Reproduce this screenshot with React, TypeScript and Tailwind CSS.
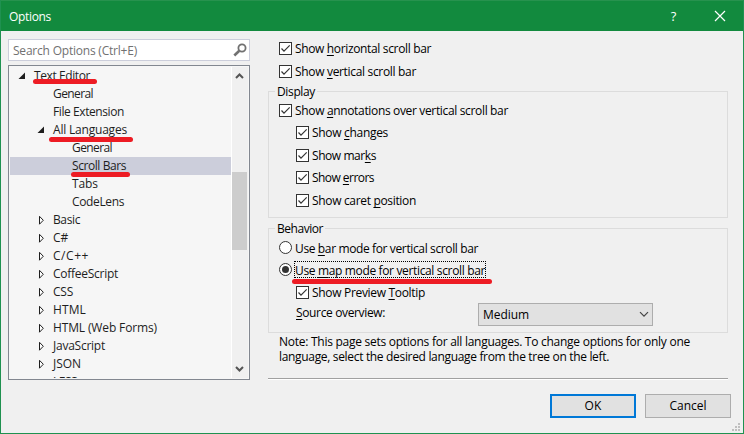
import { useLayoutEffect, useRef, useState } from "react";

/* A run of text spread to a given width; "_" marks the access key that follows it. */
function Label({ text, width, className = "" }: { text: string; width: number; className?: string }) {
  const ref = useRef<HTMLSpanElement>(null);
  const [spacing, setSpacing] = useState(0);
  const at = text.indexOf("_");
  const plain = text.replace("_", "");
  useLayoutEffect(() => {
    const el = ref.current;
    if (!el) return;
    el.style.letterSpacing = "0px";
    const next = (width - el.getBoundingClientRect().width) / plain.length;
    el.style.letterSpacing = `${next}px`;
    setSpacing(next);
  }, [width, plain]);
  return (
    <span ref={ref} className={`inline-block whitespace-pre ${className}`} style={{ letterSpacing: spacing }}>
      {at < 0 ? (
        plain
      ) : (
        <>
          {plain.slice(0, at)}
          <span className="underline decoration-1 underline-offset-2 [text-decoration-skip-ink:none]">{plain[at]}</span>
          {plain.slice(at + 1)}
        </>
      )}
    </span>
  );
}

type Node = { text: string; width: number; level: number; state?: "open" | "closed"; selected?: boolean; mark?: string };

const nodes: Node[] = [
  { text: "Text Editor", width: 56, level: 0, state: "open", mark: "left-[24px] w-[64px] top-[12px]" },
  { text: "General", width: 40, level: 1 },
  { text: "File Extension", width: 71, level: 1 },
  { text: "All Languages", width: 74, level: 1, state: "open", mark: "left-[40px] w-[84px] top-[16px]" },
  { text: "General", width: 40, level: 2 },
  { text: "Scroll Bars", width: 54, level: 2, selected: true, mark: "left-[61px] w-[59px] top-[15px]" },
  { text: "Tabs", width: 26, level: 2 },
  { text: "CodeLens", width: 52, level: 2 },
  { text: "Basic", width: 27, level: 1, state: "closed" },
  { text: "C#", width: 15, level: 1, state: "closed" },
  { text: "C/C++", width: 36, level: 1, state: "closed" },
  { text: "CoffeeScript", width: 65, level: 1, state: "closed" },
  { text: "CSS", width: 20, level: 1, state: "closed" },
  { text: "HTML", width: 33, level: 1, state: "closed" },
  { text: "HTML (Web Forms)", width: 104, level: 1, state: "closed" },
  { text: "JavaScript", width: 52, level: 1, state: "closed" },
  { text: "JSON", width: 28, level: 1, state: "closed" },
  { text: "LESS", width: 24, level: 1, state: "closed" },
];

const indents = ["pl-[7px]", "pl-[26px]", "pl-[45px]"];

function TreeRow({ node }: { node: Node }) {
  return (
    <div className={`relative flex h-[18px] shrink-0 items-start ${node.selected ? "ml-px bg-[#cccedb] pl-[44px]" : indents[node.level]}`}>
      <span className="h-[18px] w-[18px] shrink-0">
        {node.state === "open" && (
          <svg width="18" height="18" viewBox="0 0 18 18">
            <path d="M9 5.5V12H2.5Z" fill="#1e1e1e" />
          </svg>
        )}
        {node.state === "closed" && (
          <svg width="18" height="18" viewBox="0 0 18 18">
            <path d="M4.5 5.3V13.2L8.3 9.25Z" fill="#fff" stroke="#1e1e1e" />
          </svg>
        )}
      </span>
      <Label text={node.text} width={node.width} className="leading-[18px] text-[#1e1e1e]" />
      {node.mark && <span className={`absolute z-10 h-[5px] rounded-full bg-[#ed1c24] ${node.mark}`} />}
    </div>
  );
}

function Check({ text, width, className = "" }: { text: string; width: number; className?: string }) {
  return (
    <div className={`flex h-[13px] items-center gap-[3px] ${className}`}>
      <svg width="13" height="13" viewBox="0 0 13 13" className="shrink-0">
        <rect x=".5" y=".5" width="12" height="12" fill="#fff" stroke="#333" />
        <path d="M2.5 6.5 5 9.2 10.7 3.3" fill="none" stroke="#333" strokeWidth="1.2" />
      </svg>
      <Label text={text} width={width} className="leading-[15px]" />
    </div>
  );
}

function Radio({ text, width, on = false, className = "" }: { text: string; width: number; on?: boolean; className?: string }) {
  return (
    <div className={`flex h-[13px] items-center ${className}`}>
      <svg width="13" height="13" viewBox="0 0 13 13" className="shrink-0">
        <circle cx="6.5" cy="6.5" r="6" fill="#fff" stroke="#333" />
        {on && <circle cx="6.5" cy="6.5" r="3.5" fill="#333" />}
      </svg>
      <div className="relative ml-[3px] h-[15px]">
        <Label text={text} width={width} className="leading-[15px]" />
        {on && <span className="absolute top-[-1px] left-[-1px] h-[17px] w-[192px] border border-dotted border-black" />}
        {on && <span className="absolute top-[17px] left-[-3px] h-[5px] w-[200px] rounded-full bg-[#ed1c24]" />}
      </div>
    </div>
  );
}

export default function App() {
  return (
    <div className="flex h-[434px] w-[744px] flex-col overflow-hidden border border-t-0 border-[#1f9150] bg-[#f0f0f0] font-['Open_Sans','Noto_Sans',sans-serif] text-[12px] text-black">
      <header className="flex h-[31px] shrink-0 items-center border-t border-[#27924e] bg-[#128a3e] pl-[8px] text-white">
        <Label text="Options" width={42} className="mt-px leading-[16px]" />
        <span className="ml-auto w-[9px] text-center text-[13px] leading-[16px]">?</span>
        <svg width="12" height="12" viewBox="0 0 12 12" className="mr-[17px] ml-[36px]">
          <path d="M1 1 11 11M11 1 1 11" stroke="#fff" strokeWidth="1.2" />
        </svg>
      </header>

      <div className="flex flex-1">
        <aside className="ml-[7px] w-[242px] shrink-0">
          <div className="mt-[8px] flex h-[22px] items-center border border-[#cccedb] bg-white pl-[4px]">
            <Label text="Search Options (Ctrl+E)" width={124} className="mt-[2px] leading-[16px] text-[#717171]" />
            <svg width="14" height="14" viewBox="0 0 14 14" className="mr-[2px] ml-auto">
              <circle cx="9" cy="5" r="3.6" fill="none" stroke="#717171" strokeWidth="1.8" />
              <path d="M6.3 7.7 1.3 12.5" stroke="#717171" strokeWidth="2.6" />
            </svg>
          </div>

          <div className="mt-[4px] flex h-[315px] border border-[#828790] bg-[#f6f6f6]">
            <div className="flex min-w-0 flex-1 flex-col overflow-hidden pt-px pb-px">
              <div className="flex min-h-0 flex-1 flex-col overflow-hidden">
                {nodes.map((n, i) => (
                  <TreeRow key={i} node={n} />
                ))}
              </div>
            </div>
            <div className="my-px mr-px flex w-[17px] flex-col items-center border-l border-white bg-[#f0f0f0]">
              <svg width="16" height="17" viewBox="0 0 16 17" className="shrink-0">
                <path d="M4 11 7.5 7.5 11 11" fill="none" stroke="#555" strokeWidth="2" />
              </svg>
              <div className="mt-[88px] mr-px h-[78px] w-[15px] bg-[#cdcdcd]" />
              <svg width="16" height="17" viewBox="0 0 16 17" className="mt-auto shrink-0">
                <path d="M4 6 7.5 9.5 11 6" fill="none" stroke="#555" strokeWidth="2" />
              </svg>
            </div>
          </div>
        </aside>

        <main className="ml-[18px] flex w-[460px] flex-col">
          <Check text="Show _horizontal scroll bar" width={136} className="mt-[11px] ml-[11px]" />
          <Check text="Show _vertical scroll bar" width={121} className="mt-[10px] ml-[11px]" />

          <section className="mt-[13px] h-[127px] border border-[#dcdcdc]">
            <h2 className="mt-[-8px] ml-[6px] flex h-[16px] w-fit bg-[#f0f0f0] px-[2px]">
              <Label text="Display" width={38} className="leading-[16px]" />
            </h2>
            <Check text="Show _annotations over vertical scroll bar" width={213} className="mt-[4px] ml-[10px]" />
            <Check text="Show _changes" width={76} className="mt-[9px] ml-[27px]" />
            <Check text="Show mar_ks" width={64} className="mt-[10px] ml-[27px]" />
            <Check text="Show _errors" width={62} className="mt-[9px] ml-[27px]" />
            <Check text="Show caret _position" width={104} className="mt-[10px] ml-[27px]" />
          </section>

          <section className="mt-[10px] h-[105px] border border-[#dcdcdc]">
            <h2 className="mt-[-8px] ml-[6px] flex h-[16px] w-fit bg-[#f0f0f0] px-[2px]">
              <Label text="Behavior" width={46} className="leading-[16px]" />
            </h2>
            <Radio text="Use _bar mode for vertical scroll bar" width={183} className="mt-[4px] ml-[10px]" />
            <Radio text="Use _map mode for vertical scroll bar" width={190} on className="mt-[9px] ml-[10px]" />
            <Check text="Show Preview _Tooltip" width={113} className="mt-[10px] ml-[27px]" />
            <div className="mt-[4px] ml-[27px] flex h-[23px]">
              <Label text="_Source overview:" width={89} className="mt-[2px] leading-[16px]" />
              <div className="ml-[93px] flex w-[175px] items-center border border-[#adadad] bg-[#e1e1e1] pl-[4px]">
                <Label text="Medium" width={46} className="mt-px leading-[16px]" />
                <svg width="10" height="7" viewBox="0 0 10 7" className="mr-[3px] ml-auto">
                  <path d="M1 1.2 5 5.2 9 1.2" fill="none" stroke="#444" strokeWidth="1.2" />
                </svg>
              </div>
            </div>
          </section>

          <div className="mt-px ml-[11px] flex flex-col items-start leading-[15px]">
            <Label text="Note: This page sets options for all languages. To change options for only one" width={411} />
            <Label text="language, select the desired language from the tree on the left." width={330} />
          </div>
          <div className="mt-auto mb-[53px] h-[2px] border-b border-white bg-[#a0a0a0]" />
        </main>
      </div>

      <footer className="relative mt-[-39px] ml-auto flex h-[39px] w-[193px] shrink-0 items-start gap-[9px]">
        <button className="flex h-[24px] w-[86px] items-center justify-center border-2 border-[#0078d7] bg-[#e1e1e1]">
          <Label text="OK" width={17} className="leading-[16px]" />
        </button>
        <button className="flex h-[24px] w-[86px] items-center justify-center border border-[#adadad] bg-[#e1e1e1]">
          <Label text="Cancel" width={37} className="leading-[16px]" />
        </button>
        <svg width="8" height="8" viewBox="0 0 8 8" className="absolute right-[3px] bottom-[2px]" fill="#bfbfbf">
          <path d="M6 0h2v2H6zM3 3h2v2H3zM6 3h2v2H6zM0 6h2v2H0zM3 6h2v2H3zM6 6h2v2H6z" />
        </svg>
      </footer>
    </div>
  );
}
